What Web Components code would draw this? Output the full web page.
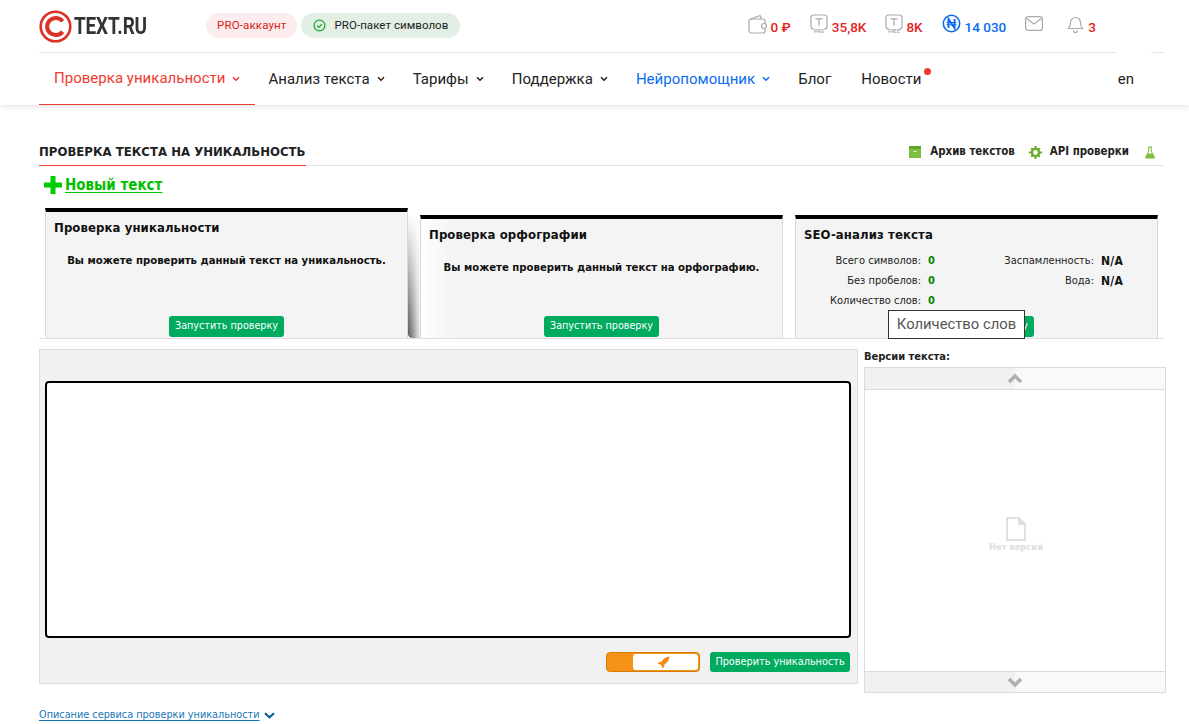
<!DOCTYPE html>
<html lang="ru"><head><meta charset="utf-8"><title>TEXT.RU</title>
<style>
html,body{margin:0;background:#fff;color:#111;overflow:hidden}
body{font-family:"DejaVu Sans",sans-serif;height:724px}
</style></head><body>
<site-header>
  <top-bar></top-bar>
  <main-nav></main-nav>
</site-header>
<page-main>
  <title-bar></title-bar>
  <new-link>Новый текст</new-link>
  <card-row></card-row>
  <work-area></work-area>
  <desc-link>Описание сервиса проверки уникальности</desc-link>
</page-main>
<script>
const def=(name,html)=>customElements.define(name,class extends HTMLElement{
  constructor(){super();this.attachShadow({mode:'open'}).innerHTML=typeof html==='function'?html(this):html}
  connectedCallback(){ if(typeof html==='function') this.shadowRoot.innerHTML=html(this) }
});
const chev=(c)=>`<svg width="8" height="6" viewBox="0 0 8 6" style="margin-left:7px;flex:none"><path d="M1 1.200l3 3 3-3" fill="none" stroke="${c}" stroke-width="1.500"/></svg>`;
const DV='"DejaVu Sans",sans-serif';

def('site-header',`<style>:host{display:block;height:105px;background:#fff;box-shadow:0 2px 6px rgba(0,0,0,.1);position:relative}
.w{padding:0 25px 0 39px;height:100%;box-sizing:border-box}</style><div class="w"><slot></slot></div>`);

def('site-logo',`<style>:host{display:flex;align-items:center;width:167px}
span{font:700 24px/1 Roboto,sans-serif;color:#333;display:inline-block;transform:scaleX(.79);transform-origin:0 50%;margin-left:2px;letter-spacing:-.2px}</style>
<svg width="33" height="33" viewBox="0 0 33 33" style="flex:none"><circle cx="16.500" cy="16.500" r="14.800" fill="none" stroke="#db3127" stroke-width="2.600"/><path d="M23.600 11.300A8.600 8.600 0 1 0 23.600 21.700" fill="none" stroke="#db3127" stroke-width="4"/></svg><span>TEXT.RU</span>`);

def('pill-tag',`<style>:host{display:inline-flex;align-items:center;height:25px;border-radius:13px;font:400 11.500px/1 Roboto,sans-serif;box-sizing:border-box;white-space:nowrap}
:host([tone=red]){background:#fdeced;color:#d5201a;padding:0 10px 0 11px;letter-spacing:.15px}
:host([tone=green]){background:#e3efe5;color:#222;padding:0 12px;letter-spacing:.05px}</style><slot name="i"></slot><slot></slot>`);

def('stat-item',`<style>:host{display:inline-flex;align-items:center;gap:4px;font:500 13.500px/1 Roboto,sans-serif;color:#e2231a;white-space:nowrap}
:host([blue]){color:#0a6cf0} ::slotted(svg){flex:none;margin-top:-4px}
span{padding-top:4px}</style><slot name="i"></slot><span><slot></slot></span>`);

const tIcon=(lab)=>`<svg slot="i" width="18" height="20" viewBox="0 0 18 20" fill="none" stroke="#a9a9a9" stroke-width="1.200"><path d="M4 15H3.500A2.500 2.500 0 0 1 1 12.500V3.500A2.500 2.500 0 0 1 3.500 1h11A2.500 2.500 0 0 1 17 3.500v9a2.500 2.500 0 0 1-2.500 2.500H14"/><path d="M5.500 4.800h7M9 4.800v7"/><text x="9" y="18.800" text-anchor="middle" font-family="Roboto" font-size="5" fill="#a0a0a0" stroke="none">${lab}</text></svg>`;

def('top-bar',`<style>:host{display:block;height:53px}
.row{display:flex;align-items:center;height:52px}
.line{display:flex;height:1px}.line i{background:#e4e4e4;display:block}
.pills{display:flex;gap:4px;margin-top:-1px}
.stats{margin-left:auto;margin-right:68px;display:flex;align-items:center;gap:19px;margin-top:-1px}
</style><div class="row"><site-logo></site-logo><div class="pills"><pill-tag tone="red">PRO-аккаунт</pill-tag><pill-tag tone="green"><svg slot="i" width="13" height="13" viewBox="0 0 13 13" style="margin-right:9px" fill="none" stroke="#10a826" stroke-width="1.200"><circle cx="6.500" cy="6.500" r="5.400"/><path d="M4 6.700l1.800 1.700 3.200-3.300"/></svg>PRO-пакет символов</pill-tag></div>
<div class="stats">
<stat-item style="gap:3px"><svg slot="i" width="20" height="20" viewBox="0 0 20 20" fill="none" stroke="#a9a9a9" stroke-width="1.200"><path d="M2 5.500L12 1.500l1.500 3.500"/><path d="M1 7a2 2 0 0 1 2-2h12a2 2 0 0 1 2 2v10a2 2 0 0 1-2 2H3a2 2 0 0 1-2-2z"/><circle cx="16" cy="12" r="2.500" fill="#fff"/></svg>0 ₽</stat-item>
<stat-item>${tIcon('PRO')}35,8K</stat-item>
<stat-item style="gap:3px">${tIcon('FREE')}8K</stat-item>
<stat-item blue><svg slot="i" width="19" height="19" viewBox="0 0 19 19" fill="none" stroke="#0a6cf0"><circle cx="9.500" cy="9.500" r="8.200" stroke-width="1.600"/><path d="M6.500 14V5l6 9V5" stroke-width="1.900"/><path d="M4.500 8.500h10M4.500 10.800h10" stroke-width="1"/></svg>14 030</stat-item>
<svg width="18" height="15" viewBox="0 0 18 15" fill="none" stroke="#a9a9a9" stroke-width="1.200" style="margin-top:-5px"><rect x=".6" y=".6" width="16.800" height="13.800" rx="2.500"/><path d="M1.500 2.500L9 8l7.500-5.500"/></svg>
<stat-item style="margin-left:5px"><svg slot="i" width="17" height="18" viewBox="0 0 17 18" fill="none" stroke="#a9a9a9" stroke-width="1.200"><path d="M1.500 13.500c1.500-1.500 2-2.500 2-6a5 5 0 0 1 10 0c0 3.500.5 4.500 2 6z"/><path d="M6.500 15.500a2 2 0 0 0 4 0"/></svg>3</stat-item>
</div></div>
<div class="line"><i style="width:1077px"></i><i style="width:13px;margin-left:35px"></i></div>`);

def('nav-item',h=>`<style>:host{display:flex;align-items:center;height:52px;font:400 15px/1 Roboto,sans-serif;letter-spacing:.02px;color:#222;white-space:nowrap;position:relative;box-sizing:border-box}
:host([active]){color:#ee3b2f;padding:0 15px;border-bottom:1px solid #ee3b2f}
:host([ai]){color:#0a6cf0}
b{position:absolute;width:7px;height:7px;border-radius:50%;background:#ee3b2f;right:-10px;top:15px}</style><slot></slot>${h.hasAttribute('dot')?'<b></b>':''}${h.hasAttribute('drop')?chev(h.hasAttribute('active')?'#ee3b2f':h.hasAttribute('ai')?'#0a6cf0':'#222'):''}`);

def('main-nav',`<style>:host{display:flex;height:52px;gap:28px}nav-item[active]{margin-right:-15px}
nav-item[dot]{margin-left:2px}
.en{margin-left:auto;margin-right:30px}</style>
<nav-item active drop>Проверка уникальности</nav-item><nav-item drop>Анализ текста</nav-item><nav-item drop>Тарифы</nav-item><nav-item drop>Поддержка</nav-item><nav-item ai drop>Нейропомощник</nav-item><nav-item>Блог</nav-item><nav-item dot>Новости</nav-item><nav-item class="en">en</nav-item>`);

def('page-main',`<style>:host{display:block;padding:36px 25px 0 39px}</style><slot></slot>`);

def('title-bar',`<style>:host{display:flex;align-items:flex-end;height:24px;border-bottom:1px solid #e2e2e2}
h1{margin:0;font:700 condensed 13px/22px ${DV};letter-spacing:.03px;color:#222;height:24px;border-bottom:1px solid #ee3b2f;margin-bottom:-1px;text-transform:uppercase;white-space:nowrap}
.r{margin-left:auto;margin-right:8px;display:flex;align-items:center;height:24px;padding-bottom:2px;box-sizing:border-box;font:700 condensed 11.400px/1 ${DV}}
.r span{color:#222}svg{flex:none}</style>
<h1>Проверка текста на уникальность</h1><div class="r">
<svg width="12" height="12" viewBox="0 0 12 12" style="margin-right:9px"><path d="M0 0h12v3H0z" fill="#5aa52a"/><path d="M0 3h12v9H0z" fill="#7fbf3f"/><path d="M4.500 5h3v1h-3z" fill="#e8f4d8"/></svg><span style="margin-right:14px">Архив текстов</span>
<svg width="13" height="13" viewBox="0 0 12 12" style="margin-right:8px"><circle cx="6" cy="6" r="3.300" fill="none" stroke="#6aab2c" stroke-width="2.200"/><path d="M5 0h2v2H5zM5 10h2v2H5zM0 5h2v2H0zM10 5h2v2h-2zM1.300 2.700l1.400-1.400 1.300 1.300-1.400 1.400zM8 9.400l1.400-1.400 1.300 1.300-1.400 1.400zM9.300 1.300l1.400 1.400-1.300 1.300L8 2.700zM2.600 8L4 9.400l-1.300 1.300-1.400-1.400z" fill="#6aab2c"/></svg><span style="margin-right:15px">API проверки</span>
<svg width="12" height="13" viewBox="0 0 11 13"><path d="M3.500 1h4M4.300 1v4L.8 12h9.400L6.700 5V1" fill="none" stroke="#7fb93a" stroke-width="1"/><path d="M3 7.500h5L10 12H1z" fill="#7fbf3f"/></svg></div>`);

def('new-link',`<style>:host{display:flex;align-items:center;height:20px;margin:9px 0 0 5px;font:700 condensed 15px/20px ${DV};color:#00c000}
u{text-underline-offset:2px}svg{margin-right:3px}</style><svg width="18" height="18" viewBox="0 0 18 18"><path d="M6.500 0h5v6.500H18v5h-6.500V18h-5v-6.500H0v-5h6.500z" fill="#0c0"/></svg><u><slot></slot></u>`);

def('run-btn',`<style>:host{display:inline-flex;align-items:center;justify-content:center;height:21px;width:115px;background:#00ab60;border-radius:3px;color:#fff;font:400 condensed 10.700px/1 ${DV};white-space:nowrap;box-sizing:border-box}</style><slot></slot>`);

def('check-card',h=>`<style>:host{display:flex;flex-direction:column;width:363px;box-sizing:border-box;background:#f4f4f4;border-top:4px solid #000;border-left:1px solid #d8d8d8;border-right:1px solid #d8d8d8;padding:0 8px 1px;position:relative}
:host([inner]){background:linear-gradient(90deg,#fff,#f4f4f4 30px)}
h2{margin:8px 0 0;font:700 condensed 13px/16px ${DV};color:#111;letter-spacing:.1px}
.body{flex:1;min-height:0}
.foot{display:flex;justify-content:center}</style><h2>${h.getAttribute('heading')||''}</h2><div class="body"><slot></slot></div><div class="foot"><run-btn>Запустить проверку</run-btn></div>`);

def('card-note',`<style>:host{display:block;text-align:center;font:700 condensed 11.250px/14px ${DV};color:#111;margin-top:18px}</style><slot></slot>`);

def('seo-grid',`<style>:host{display:grid;grid-template-columns:125px 34px 4px 135px 40px;grid-auto-rows:20px;margin-top:8px;font:400 condensed 11px/20px ${DV};color:#222;margin-left:-1px}
.l{text-align:right;white-space:nowrap;padding-right:7px}.v{font-weight:700;color:#080}.n{font-weight:700;color:#111;font-size:12px;letter-spacing:.3px}</style>
<div class="l">Всего символов:</div><div class="v">0</div><div></div><div class="l">Заспамленность:</div><div class="n">N/A</div>
<div class="l">Без пробелов:</div><div class="v">0</div><div></div><div class="l">Вода:</div><div class="n">N/A</div>
<div class="l">Количество слов:</div><div class="v">0</div>`);

def('tool-tip',`<style>:host{position:absolute;left:92px;top:91px;width:137px;height:29px;box-sizing:border-box;border:1px solid #333;background:#fff;color:#555;font:400 14.800px/27px Roboto,sans-serif;text-align:center;white-space:nowrap}</style><slot></slot>`);

def('card-row',`<style>:host{display:flex;height:130px;margin:13px 0 10px;padding-left:6px;position:relative;border-bottom:1px solid #dedede}
.sp{width:12px;margin-top:7px;background:linear-gradient(90deg,#555,#eee);-webkit-mask:linear-gradient(#0000,#000);mask:linear-gradient(#0000,#000);border-radius:0 0 0 4px}
.g{width:12px}.m{margin-top:7px}
check-card:not(.m){border-radius:0 0 0 4px}</style>
<check-card heading="Проверка уникальности"><card-note>Вы можете проверить данный текст на уникальность.</card-note></check-card>
<div class="sp"></div>
<check-card class="m" inner heading="Проверка орфографии"><card-note>Вы можете проверить данный текст на орфографию.</card-note></check-card>
<div class="g"></div>
<check-card class="m" heading="SEO-анализ текста"><seo-grid></seo-grid><tool-tip>Количество слов</tool-tip></check-card>`);

def('speed-toggle',`<style>:host{display:flex;width:94px;height:20px;box-sizing:border-box;border:1px solid #d97c06;border-radius:4px;background:#f59218;overflow:hidden}
i{width:26px}div{flex:1;background:#fff;display:flex;align-items:center;justify-content:center;margin:1px 1px 1px 0;border-radius:3px;padding-right:4px}</style><i></i><div><svg width="13" height="13" viewBox="0 0 13 13"><path d="M12.500.500C9 .700 6.500 2.500 4.500 5.500L2 6 .5 8l2.700.3 1.600 1.600L5 12.500l2-1.500.5-2.500c3-2 4.800-4.500 5-8z" fill="#f58a14"/></svg></div>`);

def('text-editor',`<style>:host{display:flex;flex-direction:column;box-sizing:border-box;height:335px;background:#f1f1f1;border:1px solid #dcdcdc;padding:31px 6px 11px 5px}
.t{height:257px;box-sizing:border-box;background:#fff;border:2px solid #000;border-radius:4px}
.b{display:flex;justify-content:flex-end;align-items:center;margin-top:14px;gap:10px;padding-right:1px}
run-btn{height:20px;width:140px;font-size:10.800px}</style><div class="t"></div><div class="b"><speed-toggle></speed-toggle><run-btn>Проверить уникальность</run-btn></div>`);

const ud=(p)=>`<svg width="16" height="11" viewBox="0 0 16 11"><path d="${p}" fill="none" stroke="#b0b0b0" stroke-width="3.500"/></svg>`;
def('version-list',`<style>:host{display:flex;flex-direction:column;height:344px}
.h{font:700 condensed 11px/16px ${DV};color:#222;height:18px}
.box{display:flex;flex-direction:column;border:1px solid #dcdcdc;background:#fff;height:326px;box-sizing:border-box}
.bar{height:21px;flex:none;display:flex;align-items:center;justify-content:center;background:linear-gradient(90deg,#f1f1f1 50%,#f9f9f9 50%)}
.top{border-bottom:1px solid #dcdcdc}.bot{border-top:1px solid #dcdcdc;height:20px}
.em{flex:1;display:flex;flex-direction:column;align-items:center;justify-content:center;color:#ddd;font:700 condensed 9.300px/11px ${DV};gap:0;padding:8px 0 0 2px}
</style><div class="h">Версии текста:</div><div class="box"><div class="bar top">${ud('M2 9L8 3l6 6')}</div><div class="em"><svg width="20" height="24" viewBox="0 0 20 24" fill="#fff" stroke="#d8d8d8" stroke-width="1.500"><path d="M1 1h12l6 6v16H1z"/><path d="M13 1v6h6" fill="#e4e4e4"/></svg><span>Нет версий</span></div><div class="bar bot">${ud('M2 2L8 8l6-6')}</div></div>`);

def('work-area',`<style>:host{display:grid;grid-template-columns:819px 302px;column-gap:6px;width:1127px;height:344px;align-items:start}</style><text-editor></text-editor><version-list></version-list>`);

def('desc-link',`<style>:host{display:flex;align-items:center;margin-top:15px;font:400 condensed 10.800px/14px ${DV};color:#1778b8}u{text-underline-offset:2px}svg{margin-left:4px}</style><u><slot></slot></u><svg width="11" height="7" viewBox="0 0 11 7"><path d="M1 1.300l4.500 4 4.500-4" fill="none" stroke="#06608f" stroke-width="2.200"/></svg>`);
</script>
</body></html>
